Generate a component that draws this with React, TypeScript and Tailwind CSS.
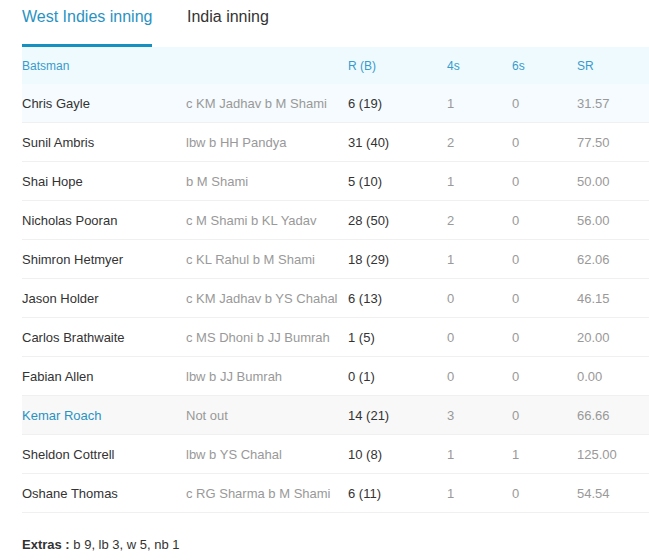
import React from 'react';

interface BatRow {
  name: string;
  out: string;
  runs: string;
  fours: string;
  sixes: string;
  sr: string;
  tint?: 'blue' | 'gray';
  highlight?: boolean;
}

const rows: BatRow[] = [
  { name: 'Chris Gayle', out: 'c KM Jadhav b M Shami', runs: '6 (19)', fours: '1', sixes: '0', sr: '31.57', tint: 'blue' },
  { name: 'Sunil Ambris', out: 'lbw b HH Pandya', runs: '31 (40)', fours: '2', sixes: '0', sr: '77.50' },
  { name: 'Shai Hope', out: 'b M Shami', runs: '5 (10)', fours: '1', sixes: '0', sr: '50.00' },
  { name: 'Nicholas Pooran', out: 'c M Shami b KL Yadav', runs: '28 (50)', fours: '2', sixes: '0', sr: '56.00' },
  { name: 'Shimron Hetmyer', out: 'c KL Rahul b M Shami', runs: '18 (29)', fours: '1', sixes: '0', sr: '62.06' },
  { name: 'Jason Holder', out: 'c KM Jadhav b YS Chahal', runs: '6 (13)', fours: '0', sixes: '0', sr: '46.15' },
  { name: 'Carlos Brathwaite', out: 'c MS Dhoni b JJ Bumrah', runs: '1 (5)', fours: '0', sixes: '0', sr: '20.00' },
  { name: 'Fabian Allen', out: 'lbw b JJ Bumrah', runs: '0 (1)', fours: '0', sixes: '0', sr: '0.00' },
  { name: 'Kemar Roach', out: 'Not out', runs: '14 (21)', fours: '3', sixes: '0', sr: '66.66', tint: 'gray', highlight: true },
  { name: 'Sheldon Cottrell', out: 'lbw b YS Chahal', runs: '10 (8)', fours: '1', sixes: '1', sr: '125.00' },
  { name: 'Oshane Thomas', out: 'c RG Sharma b M Shami', runs: '6 (11)', fours: '1', sixes: '0', sr: '54.54' },
];

const cols = 'grid grid-cols-[164px_162px_99px_65px_65px_1fr] items-center';

export default function App() {
  return (
    <div
      className="w-[649px] h-[560px] bg-white overflow-hidden text-[#333] pl-[22px]"
      style={{ fontFamily: '"Liberation Sans", Arial, sans-serif' }}
    >
      <div className="flex h-[47px] text-[16px]">
        <div className="flex flex-col justify-between w-[130px]">
          <span className="pt-[5px] text-[#2a92c2] whitespace-nowrap">West Indies inning</span>
          <div className="h-[3px] bg-[#1690c0]" />
        </div>
        <span className="pt-[5px] ml-[35px] text-[#333]">India inning</span>
      </div>

      <div className={`${cols} h-[37px] bg-[#eefafe] text-[12px] text-[#3a9acb]`}>
        <span>Batsman</span>
        <span />
        <span>R (B)</span>
        <span>4s</span>
        <span>6s</span>
        <span>SR</span>
      </div>

      {rows.map((r) => (
        <div
          key={r.name}
          className={`${cols} h-[39px] pt-[2px] border-b border-[#f0f0f0] text-[13px] ${
            r.tint === 'blue' ? 'bg-[#f5fbfe]' : r.tint === 'gray' ? 'bg-[#f8f8f8]' : 'bg-white'
          }`}
        >
          <span className={r.highlight ? 'text-[#2a92c2]' : 'text-[#333]'}>{r.name}</span>
          <span className="text-[#999] whitespace-nowrap">{r.out}</span>
          <span className="text-[#333]">{r.runs}</span>
          <span className="text-[#999]">{r.fours}</span>
          <span className="text-[#999]">{r.sixes}</span>
          <span className="text-[#999]">{r.sr}</span>
        </div>
      ))}

      <div className="pt-[22px] text-[13px] text-[#333]">
        <span className="font-bold">Extras :</span> b 9, lb 3, w 5, nb 1
      </div>
    </div>
  );
}
